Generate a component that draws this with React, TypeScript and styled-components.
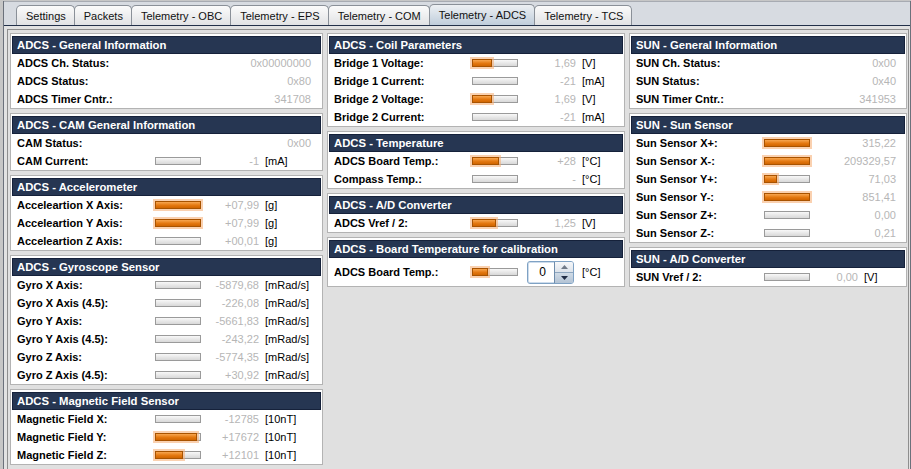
import React from 'react';
import styled, { createGlobalStyle } from 'styled-components';

const GlobalStyle = createGlobalStyle`
  html, body { margin: 0; padding: 0; }
  body { font-family: "Liberation Sans", Arial, sans-serif; background: #e0e0e0; }
`;

type Row = { label: string; value: string; unit?: string; bar?: number; spin?: boolean };
type PanelData = { title: string; rows: Row[] };
type Layout = { label: number; value: number; unit: number };
type ColumnData = { width: number; layout: Layout; panels: PanelData[] };

const tabs = ['Settings', 'Packets', 'Telemetry - OBC', 'Telemetry - EPS', 'Telemetry - COM', 'Telemetry - ADCS', 'Telemetry - TCS'];

const columns: ColumnData[] = [
  {
    width: 313,
    layout: { label: 138, value: 58, unit: 52 },
    panels: [
      {
        title: 'ADCS - General Information',
        rows: [
          { label: 'ADCS Ch. Status:', value: '0x00000000' },
          { label: 'ADCS Status:', value: '0x80' },
          { label: 'ADCS Timer Cntr.:', value: '341708' },
        ],
      },
      {
        title: 'ADCS - CAM General Information',
        rows: [
          { label: 'CAM Status:', value: '0x00' },
          { label: 'CAM Current:', value: '-1', unit: '[mA]', bar: 0 },
        ],
      },
      {
        title: 'ADCS - Accelerometer',
        rows: [
          { label: 'Acceleartion X Axis:', value: '+07,99', unit: '[g]', bar: 1 },
          { label: 'Acceleartion Y Axis:', value: '+07,99', unit: '[g]', bar: 1 },
          { label: 'Acceleartion Z Axis:', value: '+00,01', unit: '[g]', bar: 0 },
        ],
      },
      {
        title: 'ADCS - Gyroscope Sensor',
        rows: [
          { label: 'Gyro X Axis:', value: '-5879,68', unit: '[mRad/s]', bar: 0 },
          { label: 'Gyro X Axis (4.5):', value: '-226,08', unit: '[mRad/s]', bar: 0 },
          { label: 'Gyro Y Axis:', value: '-5661,83', unit: '[mRad/s]', bar: 0 },
          { label: 'Gyro Y Axis (4.5):', value: '-243,22', unit: '[mRad/s]', bar: 0 },
          { label: 'Gyro Z Axis:', value: '-5774,35', unit: '[mRad/s]', bar: 0 },
          { label: 'Gyro Z Axis (4.5):', value: '+30,92', unit: '[mRad/s]', bar: 0 },
        ],
      },
      {
        title: 'ADCS - Magnetic Field Sensor',
        rows: [
          { label: 'Magnetic Field X:', value: '-12785', unit: '[10nT]', bar: 0 },
          { label: 'Magnetic Field Y:', value: '+17672', unit: '[10nT]', bar: 0.9 },
          { label: 'Magnetic Field Z:', value: '+12101', unit: '[10nT]', bar: 0.6 },
        ],
      },
    ],
  },
  {
    width: 298,
    layout: { label: 138, value: 58, unit: 40 },
    panels: [
      {
        title: 'ADCS - Coil Parameters',
        rows: [
          { label: 'Bridge 1 Voltage:', value: '1,69', unit: '[V]', bar: 0.41 },
          { label: 'Bridge 1 Current:', value: '-21', unit: '[mA]', bar: 0 },
          { label: 'Bridge 2 Voltage:', value: '1,69', unit: '[V]', bar: 0.41 },
          { label: 'Bridge 2 Current:', value: '-21', unit: '[mA]', bar: 0 },
        ],
      },
      {
        title: 'ADCS - Temperature',
        rows: [
          { label: 'ADCS Board Temp.:', value: '+28', unit: '[°C]', bar: 0.57 },
          { label: 'Compass Temp.:', value: '-', unit: '[°C]', bar: 0 },
        ],
      },
      {
        title: 'ADCS - A/D Converter',
        rows: [{ label: 'ADCS Vref / 2:', value: '1,25', unit: '[V]', bar: 0.5 }],
      },
      {
        title: 'ADCS - Board Temperature for calibration',
        rows: [{ label: 'ADCS Board Temp.:', value: '0', unit: '[°C]', bar: 0.31, spin: true }],
      },
    ],
  },
  {
    width: 278,
    layout: { label: 128, value: 48, unit: 38 },
    panels: [
      {
        title: 'SUN - General Information',
        rows: [
          { label: 'SUN Ch. Status:', value: '0x00' },
          { label: 'SUN Status:', value: '0x40' },
          { label: 'SUN Timer Cntr.:', value: '341953' },
        ],
      },
      {
        title: 'SUN - Sun Sensor',
        rows: [
          { label: 'Sun Sensor X+:', value: '315,22', bar: 1 },
          { label: 'Sun Sensor X-:', value: '209329,57', bar: 1 },
          { label: 'Sun Sensor Y+:', value: '71,03', bar: 0.24 },
          { label: 'Sun Sensor Y-:', value: '851,41', bar: 1 },
          { label: 'Sun Sensor Z+:', value: '0,00', bar: 0 },
          { label: 'Sun Sensor Z-:', value: '0,21', bar: 0 },
        ],
      },
      {
        title: 'SUN - A/D Converter',
        rows: [{ label: 'SUN Vref / 2:', value: '0,00', unit: '[V]', bar: 0 }],
      },
    ],
  },
];

const Root = styled.div`
  width: 911px;
  height: 469px;
  overflow: hidden;
  box-sizing: border-box;
  padding: 1px 0 0 3px;
  background: #c6c6c6;
  display: flex;
`;

const TabPane = styled.div`
  flex: 1;
  display: flex;
  flex-direction: column;
  border-left: 1px solid #6b717b;
  border-right: 1px solid #6b717b;
  background: #e2e2e2;
`;

const TabStrip = styled.div`
  height: 25px;
  box-sizing: border-box;
  border-top: 1px solid #a7abb2;
  border-bottom: 1px solid #223049;
  background: #d7dbe1;
  display: flex;
  align-items: flex-end;
  padding-left: 12px;
`;

const Tab = styled.div<{ $active?: boolean }>`
  height: ${(p) => (p.$active ? 21 : 20)}px;
  box-sizing: border-box;
  padding: 0 8px 0 9px;
  display: flex;
  align-items: center;
  border: 1px solid #8a9098;
  border-bottom: none;
  border-radius: 5px 5px 0 0;
  margin-right: -1px;
  background: ${(p) => (p.$active ? 'linear-gradient(#edf0f3, #bfcddb)' : 'linear-gradient(#fbfbfb, #e1e2e4)')};
  font-size: 11px;
  color: #111;
  white-space: nowrap;
`;

const Content = styled.div`
  flex: 1;
  padding: 3px 1px 0 3px;
  display: flex;
`;

const Frame = styled.div`
  flex: 1;
  border-top: 1px solid #8e8e8e;
  border-left: 1px solid #8e8e8e;
  border-right: 1px solid #8e8e8e;
  padding: 3px 0 0 2px;
  display: flex;
  gap: 4px;
  align-items: flex-start;
  background: #e0e0e0;
`;

const Column = styled.div<{ $w: number }>`
  width: ${(p) => p.$w}px;
  flex: none;
  display: flex;
  flex-direction: column;
  gap: 4px;
`;

const Panel = styled.div`
  border: 1px solid #b3b3b3;
  background: #fff;
  padding: 2px 1px 0;
`;

const Header = styled.div`
  height: 18px;
  box-sizing: border-box;
  border: 1px solid #15213a;
  background: #263652;
  color: #fff;
  font-weight: bold;
  font-size: 11.3px;
  padding-left: 4px;
  display: flex;
  align-items: center;
  white-space: nowrap;
`;

const RowGrid = styled.div<{ $l: Layout; $tall?: boolean }>`
  display: grid;
  grid-template-columns: ${(p) => `${p.$l.label}px 46px ${p.$l.value}px ${p.$l.unit}px`};
  align-items: center;
  height: ${(p) => (p.$tall ? 28 : 18)}px;
  padding-left: 5px;
  font-size: 11px;
`;

const Label = styled.div`
  grid-column: 1;
  font-weight: bold;
  color: #000;
  white-space: nowrap;
`;

const Value = styled.div<{ $span: string }>`
  grid-column: ${(p) => p.$span};
  text-align: right;
  color: #b6b6b6;
  white-space: nowrap;
  display: flex;
  justify-content: flex-end;
`;

const Unit = styled.div`
  grid-column: 4;
  padding-left: 6px;
  color: #000;
  white-space: nowrap;
`;

const Track = styled.div`
  grid-column: 2;
  position: relative;
  width: 46px;
  height: 8px;
  box-sizing: border-box;
  border: 1px solid #9a9a9a;
  background: linear-gradient(#f8f8f8, #d8d8d8);
`;

const Fill = styled.div`
  position: absolute;
  left: -1px;
  top: -1px;
  bottom: -1px;
  box-sizing: border-box;
  border: 1px solid #a85300;
  background: linear-gradient(#f7a650, #e47810 55%, #d06500);
  box-shadow: 0 0 0 2px rgba(245, 172, 112, 0.55);
`;

const Spin = styled.div`
  width: 47px;
  height: 23px;
  margin-right: 2px;
  box-sizing: border-box;
  display: flex;
  border: 1px solid #7fa2c4;
  border-radius: 3px;
  background: #fff;
  box-shadow: inset 0 0 0 1px #cddcec;
  overflow: hidden;
`;

const SpinText = styled.div`
  flex: 1;
  display: flex;
  align-items: center;
  justify-content: flex-end;
  padding-right: 8px;
  color: #000;
  font-size: 12px;
`;

const SpinButtons = styled.div`
  width: 18px;
  display: flex;
  flex-direction: column;
  border-left: 1px solid #6e8cab;
`;

const SpinBtn = styled.div<{ $down?: boolean }>`
  flex: 1;
  display: flex;
  align-items: center;
  justify-content: center;
  background: ${(p) => (p.$down ? 'linear-gradient(#d0dbe6, #b3c3d4)' : 'linear-gradient(#f6f7f9, #dde3ea)')};
  border-top: ${(p) => (p.$down ? '1px solid #8ea6bf' : 'none')};
`;

const Arrow = ({ down }: { down?: boolean }) => (
  <svg width="7" height="4" viewBox="0 0 7 4">
    {down ? <path d="M0 0 H7 L3.5 4 Z" fill="#1f2c44" /> : <path d="M0 4 H7 L3.5 0 Z" fill="#707a88" />}
  </svg>
);

function RowView({ row, layout }: { row: Row; layout: Layout }) {
  const hasBar = row.bar !== undefined;
  const span = row.unit ? '3' : hasBar ? '3 / -1' : '2 / -1';
  return (
    <RowGrid $l={layout} $tall={row.spin}>
      <Label>{row.label}</Label>
      {hasBar && (
        <Track>
          {row.bar! > 0 && <Fill style={{ width: `calc(${row.bar! * 100}% + 2px)` }} />}
        </Track>
      )}
      <Value $span={span}>
        {row.spin ? (
          <Spin>
            <SpinText>{row.value}</SpinText>
            <SpinButtons>
              <SpinBtn>
                <Arrow />
              </SpinBtn>
              <SpinBtn $down>
                <Arrow down />
              </SpinBtn>
            </SpinButtons>
          </Spin>
        ) : (
          row.value
        )}
      </Value>
      {row.unit && <Unit>{row.unit}</Unit>}
    </RowGrid>
  );
}

export default function App() {
  return (
    <>
      <GlobalStyle />
      <Root>
        <TabPane>
          <TabStrip>
            {tabs.map((t) => (
              <Tab key={t} $active={t === 'Telemetry - ADCS'}>
                {t}
              </Tab>
            ))}
          </TabStrip>
          <Content>
            <Frame>
              {columns.map((c, ci) => (
                <Column key={ci} $w={c.width}>
                  {c.panels.map((p) => (
                    <Panel key={p.title}>
                      <Header>{p.title}</Header>
                      {p.rows.map((r) => (
                        <RowView key={r.label} row={r} layout={c.layout} />
                      ))}
                    </Panel>
                  ))}
                </Column>
              ))}
            </Frame>
          </Content>
        </TabPane>
      </Root>
    </>
  );
}
